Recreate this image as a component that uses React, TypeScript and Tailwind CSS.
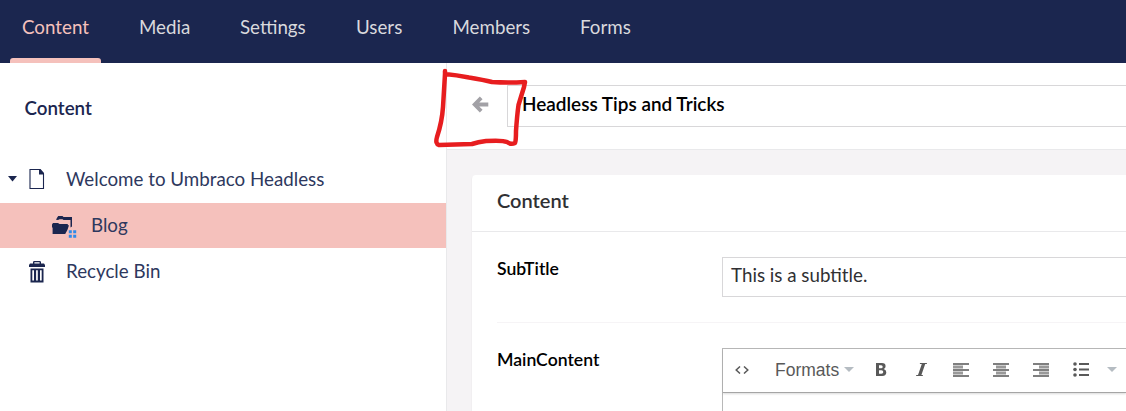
import type { ReactNode } from "react";

const tabs = [
  { label: "Content", width: "w-[117px]" },
  { label: "Media", width: "w-[101px]" },
  { label: "Settings", width: "w-[116px]" },
  { label: "Users", width: "w-[96.5px]" },
  { label: "Members", width: "w-[127.5px]" },
  { label: "Forms", width: "w-[100px]" },
];

function TopBar() {
  return (
    <header className="flex h-[63px] shrink-0 bg-[#1b264f] pl-[22px] text-[18.75px] leading-[54px] text-[#d9d9dd]">
      {tabs.map((tab, i) => (
        <div key={tab.label} className={`relative shrink-0 whitespace-nowrap ${tab.width} ${i === 0 ? "text-[#f5c1bc]" : ""}`}>
          {tab.label}
          {i === 0 && <span className="absolute bottom-0 -left-3 h-[5px] w-[91px] rounded-t-[3px] bg-[#f5c1bc]" />}
        </div>
      ))}
    </header>
  );
}

function PageIcon() {
  return (
    <svg className="h-5 w-4" viewBox="0 0 16 20">
      <path d="M1 .5H10.5L14.5 5V19.5H1Z" fill="none" stroke="#1b264f" strokeWidth="1.1" />
      <path d="M10 0H11.5L15 4V5.5H10Z" fill="#1b264f" />
    </svg>
  );
}

function FoldersIcon() {
  return (
    <svg className="h-[23px] w-[25px]" viewBox="0 0 25 23">
      <path d="M4 3.7L5.2 1.5 6.2 0H10.5L11.5 1H20V10.5L18.5 11.5V4H11.5L10.5 3.3H7.5L6 3.9Z" fill="#1b264f" />
      <path d="M0 8.5L1 7H6L7.5 8H15.8V9.2H17L15.4 14 13.2 18H.6V12L0 11Z" fill="#1b264f" />
      <path d="M16.8 14.3H19.8V17.3H16.8ZM21.2 14.3H24.2V17.3H21.2ZM16.8 18.8H19.8V21.8H16.8ZM21.2 18.8H24.2V21.8H21.2Z" fill="#2e8aea" />
    </svg>
  );
}

function TrashIcon() {
  return (
    <svg className="h-[22px] w-4" viewBox="0 0 16 22" fill="#1b264f">
      <path d="M4 2.5V1.3Q4 0 5.3 0H10.7Q12 0 12 1.3V2.5H15L16 4V6H0V4L1 2.5ZM5.4 2.5H10.6V1.2H5.4Z" fillRule="evenodd" />
      <path d="M1.5 7.5H14.5V21.5H1.5ZM3.3 9.3V19.5H5V9.3ZM7.1 9.3V19.5H8.8V9.3ZM11 9.3V19.5H12.7V9.3Z" fillRule="evenodd" />
    </svg>
  );
}

function TreeRow({ pad, iconWidth, icon, label }: { pad: string; iconWidth: string; icon: ReactNode; label: string }) {
  return (
    <>
      <span className={`flex shrink-0 items-center ${pad} ${iconWidth}`}>{icon}</span>
      <span className="whitespace-nowrap text-[#2e385e]">{label}</span>
    </>
  );
}

function Sidebar() {
  return (
    <aside className="w-[447px] shrink-0 border-r border-[#e9e9eb] text-[18.75px] text-[#1b264f]">
      <h2 className="pt-[29px] pl-[24.5px] text-[18.75px] leading-8 font-semibold">Content</h2>
      <div className="mt-[33px] flex h-[46px] items-center pb-[2px] pl-2">
        <svg className="h-1.5 w-[9px] shrink-0" viewBox="0 0 9 6">
          <path d="M0 0H9L4.5 5.5Z" fill="#1b264f" />
        </svg>
        <TreeRow pad="pl-[12px]" iconWidth="w-[49px]" icon={<PageIcon />} label="Welcome to Umbraco Headless" />
      </div>
      <div className="flex h-[45px] items-center bg-[#f5c1bc] pl-[52px]">
        <TreeRow pad="pt-[4px]" iconWidth="w-[39px]" icon={<FoldersIcon />} label="Blog" />
      </div>
      <div className="flex h-[47px] items-center pl-[29px]">
        <TreeRow pad="pl-0" iconWidth="w-[37px]" icon={<TrashIcon />} label="Recycle Bin" />
      </div>
    </aside>
  );
}

function Caret() {
  return (
    <svg className="h-[5px] w-[10px] shrink-0" viewBox="0 0 10 5">
      <path d="M0 0H10L5 5Z" fill="#b5bcc2" />
    </svg>
  );
}

function AlignIcon({ middle }: { middle: string }) {
  return (
    <svg className="mr-6 h-[14px] w-4 shrink-0" viewBox="0 0 16 14" stroke="#555555" strokeWidth="2">
      <path d={middle} stroke="#999999" strokeWidth="3" />
      <path d="M0 1H16M0 7H16M0 13H16" strokeWidth="1.7" />
    </svg>
  );
}

function Toolbar() {
  return (
    <div className="flex h-[44px] items-center border-b border-[#a5a5a5] pb-[2px] pl-3 text-[#595959] shadow-[0_1px_2px_rgba(0,0,0,0.15)]">
      <svg className="h-2 w-[14px] shrink-0" viewBox="0 0 14 8" fill="none" stroke="#595959" strokeWidth="1.5">
        <path d="M5 .5L1.2 4 5 7.5M9 .5L12.8 4 9 7.5" />
      </svg>
      <span className="ml-[26px] w-[69px] shrink-0 font-['Liberation_Sans',sans-serif] text-[17.5px] leading-6">Formats</span>
      <Caret />
      <svg className="ml-[22px] h-[13px] w-[11px] shrink-0" viewBox="0 0 11 13">
        <path d="M0 0H6Q9.6 0 9.6 3.2 9.6 5.3 7.7 6.1 10.3 6.8 10.3 9.3 10.3 13 6.3 13H0ZM3 2.2V5.2H5.1Q6.7 5.2 6.7 3.7 6.7 2.2 5.1 2.2ZM3 7.3V10.8H5.4Q7.3 10.8 7.3 9 7.3 7.3 5.4 7.3Z" fill="#595959" fillRule="evenodd" />
      </svg>
      <svg className="mr-[26px] ml-[29px] h-[13px] w-[11px] shrink-0" viewBox="0 0 11 13">
        <path d="M4 0H11L10.8 1H9.2L5.4 12H7L6.7 13H0L.3 12H2L5.8 1H3.8Z" fill="#595959" />
      </svg>
      <AlignIcon middle="M0 4H10M0 10H10" />
      <AlignIcon middle="M3 4H13M3 10H13" />
      <AlignIcon middle="M6 4H16M6 10H16" />
      <svg className="mr-[18px] h-[15px] w-4 shrink-0" viewBox="0 0 16 15" fill="#595959">
        <circle cx="2" cy="2" r="1.8" />
        <circle cx="2" cy="7.5" r="1.8" />
        <circle cx="2" cy="13" r="1.8" />
        <path d="M6 1H16V3H6ZM6 6.5H16V8.5H6ZM6 12H16V14H6Z" />
      </svg>
      <Caret />
    </div>
  );
}

function Editor() {
  return (
    <main className="flex min-w-0 flex-1 flex-col bg-[#f5f3f5]">
      <div className="flex h-[87px] shrink-0 border-b border-[#e9e9eb] bg-white">
        <svg className="mt-[33px] ml-[25px] h-[17px] w-[17px] shrink-0" viewBox="0 0 17 17">
          <path d="M9.2 1.8L2.6 8.5 9.2 15.2M3.5 8.5H16.3" fill="none" stroke="#a2a1a6" strokeWidth="3.8" />
        </svg>
        <div className="mt-[22px] ml-[18px] h-[42px] flex-1 border border-r-0 border-[#d8d7d9] pl-[14px] text-[18.95px] leading-[35px] font-semibold whitespace-nowrap text-black">
          Headless Tips and Tricks
        </div>
      </div>
      <section className="mt-[25px] ml-[25px] flex-1 rounded-tl-[4px] bg-white shadow-[0_1px_1px_rgba(0,0,0,0.16)]">
        <h3 className="h-[57px] border-b border-[#e9e9eb] pl-[25px] text-[20px] leading-[51px] font-semibold text-[#303033]">Content</h3>
        <div className="ml-[25px] flex h-[91px] border-b border-[#f6f4f6] pt-[25px]">
          <div className="w-[225px] shrink-0 text-[17.6px] leading-6 font-semibold text-black">SubTitle</div>
          <div className="h-10 flex-1 border border-r-0 border-[#d8d7d9] pl-2 text-[18.75px] leading-[34px] text-[#303033]">This is a subtitle.</div>
        </div>
        <div className="ml-[25px] flex pt-[25px]">
          <div className="w-[225px] shrink-0 text-[17.6px] leading-6 font-semibold text-black">MainContent</div>
          <div className="h-[63px] min-w-0 flex-1 border border-r-0 border-b-0 border-[#b8b8b8]">
            <Toolbar />
          </div>
        </div>
      </section>
    </main>
  );
}

export default function App() {
  return (
    <div className="relative flex h-[411px] w-[1126px] flex-col overflow-hidden bg-white font-[Lato,sans-serif]">
      <TopBar />
      <div className="flex min-h-0 flex-1">
        <Sidebar />
        <Editor />
      </div>
      <svg className="pointer-events-none absolute top-[60px] left-[425px] h-[100px] w-[120px]" viewBox="0 0 120 100">
        <path d="M20 11L20 14Q31 15 44 17.5Q59 20 67 22Q83 23 100 22L99 27L93.5 45Q92 56 91 71Q91 81 90 83Q86 85 82 82Q78 80 61 81Q53 82 47 84L14 85Q10 84 12 77Q17 62 18 47L20 14" fill="none" stroke="#e71d1f" strokeWidth="4.5" strokeLinecap="round" strokeLinejoin="round" />
      </svg>
    </div>
  );
}
